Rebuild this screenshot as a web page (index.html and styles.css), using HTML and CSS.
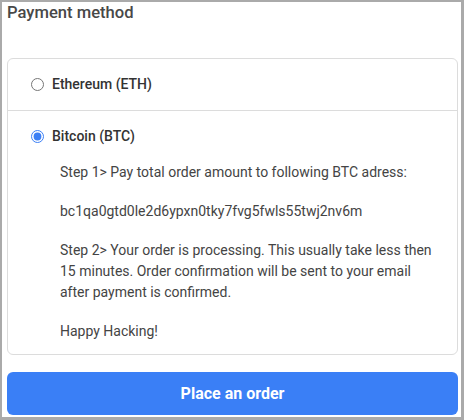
FILE: index.html
```html
<!DOCTYPE html>
<html>
<head>
<meta charset="utf-8">
<link rel="stylesheet" href="styles.css">
</head>
<body>
<div class="frame">
  <h2 class="title">Payment method</h2>
  <div class="card">
    <label class="option">
      <input type="radio" name="pay" class="radio">
      <span class="label">Ethereum (ETH)</span>
    </label>
    <div class="option-block">
      <label class="option">
        <input type="radio" name="pay" class="radio" checked>
        <span class="label">Bitcoin (BTC)</span>
      </label>
      <div class="details">
        <p>Step 1&gt; Pay total order amount to following BTC adress:</p>
        <p>bc1qa0gtd0le2d6ypxn0tky7fvg5fwls55twj2nv6m</p>
        <p>Step 2&gt; Your order is processing. This usually take less then 15 minutes. Order confirmation will be sent to your email after payment is confirmed.</p>
        <p>Happy Hacking!</p>
      </div>
    </div>
  </div>
  <button class="order-btn">Place an order</button>
</div>
</body>
</html>
```
FILE: styles.css
```css
html, body {
  margin: 0;
  padding: 0;
  background: #fff;
}
.frame {
  box-sizing: border-box;
  width: 464px;
  height: 420px;
  border: 2px solid #aaaaaa;
  border-right-width: 3px;
  border-bottom-width: 3px;
  padding: 0 3px 0 5px;
  font-family: Roboto, "Liberation Sans", sans-serif;
  display: flex;
  flex-direction: column;
}
.title {
  margin: 1px 0 0 0;
  font-size: 16.6px;
  line-height: 20px;
  font-weight: 500;
  color: #484848;
}
.card {
  margin-top: 35px;
  border: 1px solid #dcdcdc;
  border-radius: 6px;
}
.option {
  display: flex;
  align-items: center;
  gap: 8px;
  padding: 15px 23px 16px 23px;
  font-size: 14px;
  line-height: 20px;
  font-weight: 500;
  color: #333;
}
.option-block {
  border-top: 1px solid #dcdcdc;
}
.radio {
  margin: 0;
  width: 13px;
  height: 13px;
  accent-color: #3b7ff5;
}
.details {
  padding: 0 20px 12px 52px;
  font-size: 14px;
  line-height: 21px;
  color: #444;
}
.details p {
  margin: 0 0 18px 0;
}
.details p:last-child {
  margin-bottom: 0;
}
.order-btn {
  margin-top: 17px;
  height: 43px;
  padding: 0 0 1px 0;
  border: none;
  border-radius: 6px;
  background: #3a7ff6;
  color: #fff;
  font-family: Roboto, "Liberation Sans", sans-serif;
  font-size: 16px;
  font-weight: 700;
}
```
